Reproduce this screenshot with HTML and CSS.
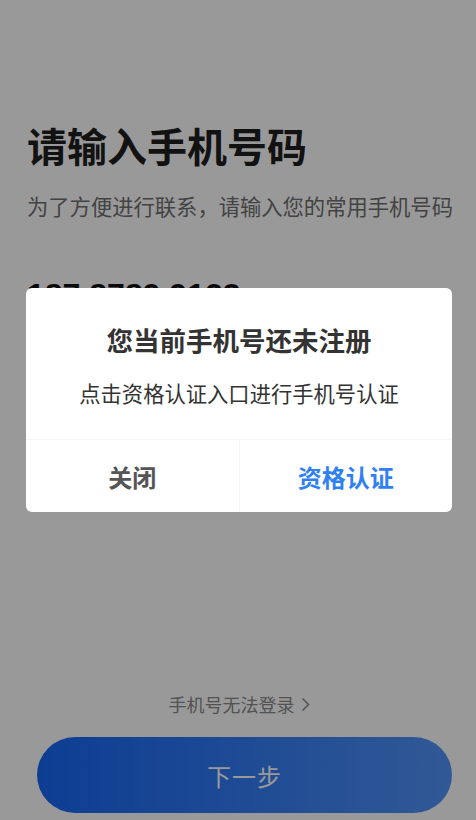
FILE: index.html
```html
<!DOCTYPE html>
<html lang="zh-CN">
<head>
    <meta charset="UTF-8">
    <title>请输入手机号码</title>
    <link rel="stylesheet" href="styles.css">
</head>
<body>

    <div class="page">
        <div class="content">
            <h1 class="title">请输入手机号码</h1>
            <p class="subtitle">为了方便进行联系，请输入您的常用手机号码</p>
            <div class="phone">187 8789 9123</div>
        </div>

        <div class="footer">
            <a class="help-link" href="#">手机号无法登录
                <svg class="chevron" width="9" height="15" viewBox="0 0 9 15">
                    <polyline points="1.5,1.5 7.5,7.5 1.5,13.5" fill="none" stroke="currentColor" stroke-width="1.5"/>
                </svg>
            </a>
            <button class="next-btn">下一步</button>
        </div>
    </div>

    <!-- Dialog over the page -->
    <div class="mask">
        <div class="dialog">
            <h3 class="dialog-title">您当前手机号还未注册</h3>
            <p class="dialog-text">点击资格认证入口进行手机号认证</p>
            <div class="dialog-actions">
                <button class="action action-close">关闭</button>
                <button class="action action-confirm">资格认证</button>
            </div>
        </div>
    </div>

</body>
</html>
```

FILE: styles.css
```css
body {
    margin: 0;
    background: #fff;
    font-family: "Noto Sans CJK SC", "Noto Sans", sans-serif;
}

.page {
    display: flex;
    flex-direction: column;
    height: 820px;
    box-sizing: border-box;
    padding-bottom: 7px;
}

.content {
    padding: 0 27px;
}

.title {
    margin: 121px 0 0;
    font-size: 40px;
    line-height: 48px;
    font-weight: 700;
    color: #1e1e1e;
}

.subtitle {
    margin: 22px 0 0;
    font-size: 21.3px;
    line-height: 30px;
    color: #707070;
    white-space: nowrap;
}

.phone {
    margin-top: 54px;
    font-family: "Liberation Sans", Arial, sans-serif;
    font-size: 32px;
    line-height: 40px;
    font-weight: 700;
    color: #111;
}

.footer {
    margin-top: auto;
    display: flex;
    flex-direction: column;
    align-items: center;
}

.help-link {
    display: flex;
    align-items: center;
    gap: 6px;
    font-size: 18px;
    line-height: 26px;
    color: #8a8a8a;
    text-decoration: none;
    margin: 0 0 1px 2px;
}

.chevron {
    margin-top: 1px;
}

.next-btn {
    margin: 19px 24px 0 37px;
    align-self: stretch;
    height: 76px;
    border: none;
    border-radius: 38px;
    background: linear-gradient(90deg, #1667f6, #5294fa);
    color: #fff;
    font-family: inherit;
    font-size: 24px;
    letter-spacing: 1px;
}

.mask {
    position: fixed;
    inset: 0;
    background: rgba(0, 0, 0, 0.4);
    display: flex;
    flex-direction: column;
    align-items: flex-start;
    padding: 288px 24px 0 26px;
}

.dialog {
    align-self: stretch;
    background: #fff;
    border-radius: 6px;
    text-align: center;
}

.dialog-title {
    margin: 34px 0 0;
    font-size: 26.5px;
    line-height: 36px;
    font-weight: 700;
    color: #333;
}

.dialog-text {
    margin: 20px 0 0;
    font-size: 21.3px;
    line-height: 30px;
    color: #333;
}

.dialog-actions {
    margin-top: 31px;
    display: flex;
    border-top: 1px solid #f5f5f5;
}

.action {
    flex: 1;
    height: 72px;
    border: none;
    background: none;
    font-family: inherit;
    font-size: 24px;
    font-weight: 700;
    padding: 0;
}

.action-close {
    color: #555;
    border-right: 1px solid #f5f5f5;
}

.action-confirm {
    color: #2f7ff5;
}
```
